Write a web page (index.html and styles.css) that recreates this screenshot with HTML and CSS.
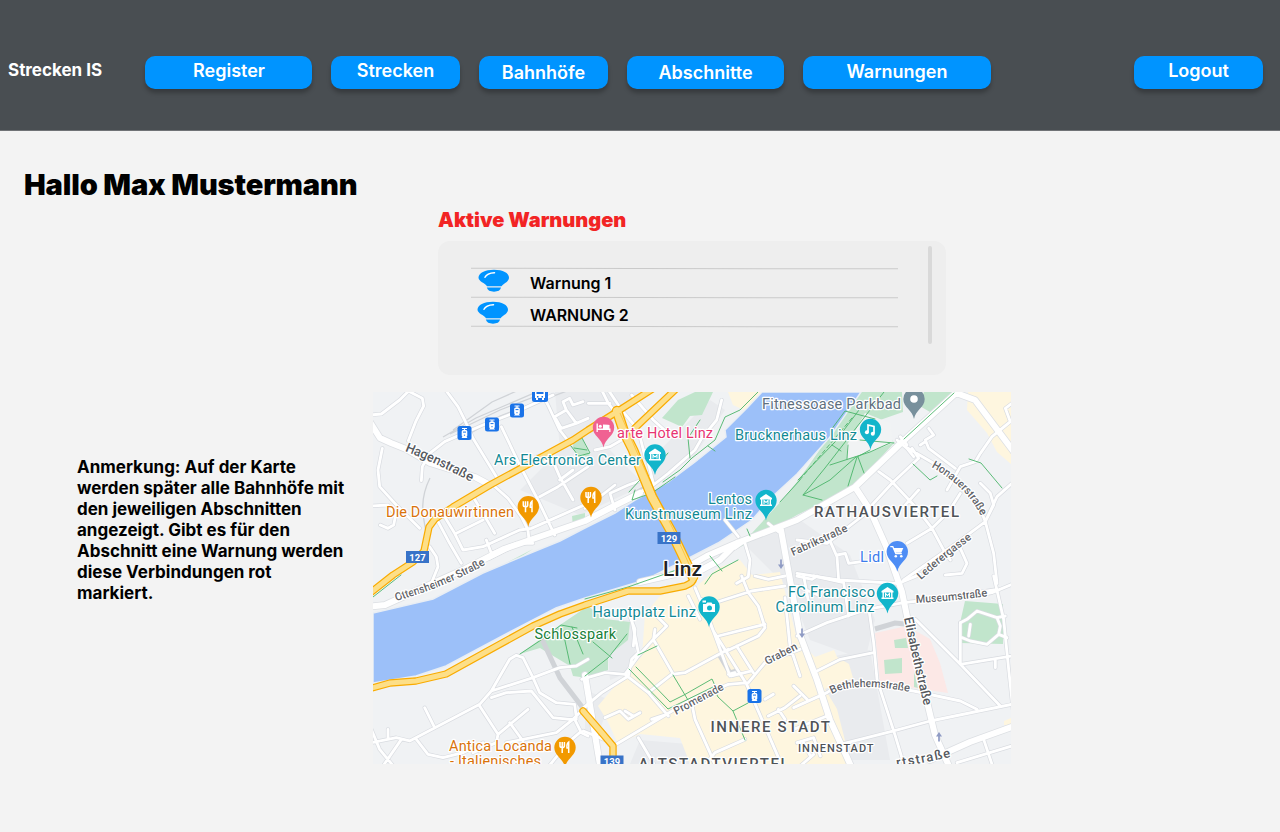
FILE: index.html
```html
<!DOCTYPE html>
<html lang="de">
<head>
<meta charset="utf-8">
<title>Strecken IS</title>
<link rel="stylesheet" href="styles.css">
</head>
<body>
<header class="topbar">
  <div class="brand">Strecken IS</div>
  <nav class="nav">
    <a class="btn w-register">Register</a>
    <a class="btn w-small">Strecken</a>
    <a class="btn w-small low">Bahnhöfe</a>
    <a class="btn w-sections low">Abschnitte</a>
    <a class="btn w-warnings mid">Warnungen</a>
  </nav>
  <a class="btn w-small logout">Logout</a>
</header>
<main>
  <h1>Hallo Max Mustermann</h1>
  <section class="warnings">
    <h2>Aktive Warnungen</h2>
    <div class="card">
      <div class="list">
        <div class="rule"></div>
        <div class="row"><svg class="lamp" viewBox="0 0 32 24"><use href="#lamp"/></svg><span>Warnung 1</span></div>
        <div class="rule"></div>
        <div class="row second"><svg class="lamp" viewBox="0 0 32 24"><use href="#lamp"/></svg><span>WARNUNG 2</span></div>
        <div class="rule"></div>
      </div>
      <div class="scrollbar"></div>
    </div>
  </section>
  <section class="overview">
    <p class="note">Anmerkung: Auf der Karte werden später alle Bahnhöfe mit den jeweiligen Abschnitten angezeigt. Gibt es für den Abschnitt eine Warnung werden diese Verbindungen rot markiert.</p>
    <svg class="map" viewBox="373 392 638 372">
      <defs>
        <g id="lamp">
          <path fill="#0094ff" d="M16 .7C25 .7 31 4 31 8.500C31 12.500 26.500 14 23.500 17.200H9C7 14 .5 12.500 .5 8.500C.5 4 7 .7 16 .7Z"/>
          <path fill="#0094ff" d="M8.800 18.600H23C22.500 21.500 20 22.700 16 22.700S9.500 21.500 8.800 18.600Z"/>
          <path fill="none" stroke="#fff" stroke-width="1.500" stroke-linecap="round" d="M7 8.300C8.500 5 11.500 4 16.500 3.800"/>
        </g>
        <path id="pin" d="M0 20C-1.500 11 -10.700 8.500 -10.700 0A10.700 10.700 0 1 1 10.700 0C10.700 8.500 1.500 11 0 20Z"/>
        <path id="fork" fill="none" stroke="#fff" stroke-width="1.500" d="M-5-5.500V-1.500Q-5 0-2.800 0T-.6-1.500V-5.500M-2.800-5.500V5.500M3.700 5.500V-5.500Q1.500-4 2 .5H3.700"/>
        <g id="museum"><path fill="#fff" d="M-6-2.600L0-6.500L6-2.600V-1H-6ZM-5-1H-3.600V4H-5ZM3.600-1H5V4H3.600ZM-6 4H6V5.600H-6Z"/><path fill="none" stroke="#fff" stroke-width="1.100" d="M-2 3.500V-.2L0 2L2-.2V3.500"/></g>
        <g id="tram"><rect x="-7" y="-7" width="14" height="14" rx="2.500" fill="#1a73e8"/><path fill="#fff" d="M-2.500-5H2.500V-4H.6V-3H1.500Q2.800-3 2.800-1.500V2.500Q2.800 3.500 2 3.700L3 5H-3L-2 3.700Q-2.800 3.500-2.800 2.500V-1.500Q-2.800-3-1.500-3H-.6V-4H-2.500Z"/><path stroke="#1a73e8" d="M-1.500-.9H1.500M-.6 2.200H.6"/></g>
        <g id="arrow"><path stroke="#8f9bc4" stroke-width="1.700" d="M0-4.500V2"/><path fill="#8f9bc4" d="M-3 .5H3L0 5Z"/></g>

        <g id="minor">
          <g transform="translate(373 390) scale(.33333)">
            <path d="M-10 75L25 72L80 30L110 0M110 5L148 25L152 48L128 95L106 152M218 0L255 50L275 90L300 145L370 260M145 272L148 230L170 190L215 155L330 105L420 70L540 15M28 175L15 240L20 290L70 345L140 415M-5 348L45 345L68 375L62 405L45 415L22 405M360 285L405 325L445 380L465 420L468 450M385 110L440 225L495 330L545 435M500 0L525 45L560 120L595 165M490 200L530 190L560 260L600 330M500 320L555 290L645 230M560 270L600 240M545 80L580 60L610 100L645 85M545 80L565 115L610 100M580 60L570 35L590 25L600 45L630 35M300 320L330 370L365 430M250 430L330 390M215 380L245 430L270 480L330 470L440 420L475 415L645 340M190 385L230 460L265 520M170 470L190 500L195 530L175 580M340 450L355 490L430 460M350 505L440 460L480 460"/>
          </g>
          <g transform="translate(585 390) scale(.33333)">
            <path d="M50 0L70 40L85 60M70 0L110 60L160 120L180 200M140 15L205 90L255 135M10 40L75 40M30 180L75 170L110 150M0 355L90 285M410 30L395 90L350 145L330 180L250 250L205 285L140 320L80 355M200 260L130 285L75 310L90 360M180 180L205 280M450 475L500 440M480 460L495 510L490 560L455 580M420 390L460 440M550 400L580 425"/>
          </g>
          <g transform="translate(797 390) scale(.33333)">
            <path d="M645 40L625 55L640 95L585 140L550 190L535 215L490 230L450 300M395 115L410 135L385 150L395 175L475 235M325 170L410 220M370 165L385 155M310 140L330 165M345 175L365 205L285 280L225 345M245 245L280 270L355 350L405 415L440 480L460 510M320 350L365 300M330 460L405 415L455 365L490 310M550 280L580 310L590 345L565 395M645 280L600 320L565 395L485 455L320 570M410 220L490 275L540 330L565 395M565 395L590 490L600 580M440 485L490 475L510 520L495 550L445 555M0 450L90 460L200 375M100 455L120 500L125 570M120 495L145 490L155 520L230 510M0 550L125 570L300 580M300 150L330 175L350 200"/>
          </g>
          <g transform="translate(373 576) scale(.33333)">
            <path d="M355 345L410 250L430 238L450 245L480 305L500 350L550 380L605 385L610 425M-5 500L70 485L110 495L320 385L355 345L480 305L560 275L610 270L645 250M355 365L400 350L475 345L540 425L590 430L610 430M155 395L185 455M320 390L375 475L370 500L300 530M375 475L465 400M410 440L450 495M130 490L165 535L210 545L270 530L330 500M45 460L45 485M-5 460L20 520L65 575M85 490L30 570M645 385L600 430L550 470L400 500M605 430L625 470L645 480M620 470L585 500L520 580"/>
          </g>
          <g transform="translate(585 576) scale(.33333)">
            <path d="M330 35L385 165L485 325L600 590M350 70L435 300M310 60L345 130M400 180L540 145M360 90L500 45L600 30M470 0L490 50L520 90L540 155L520 180L425 225M455 210L505 290M600 65L615 210L645 300M490 320L540 260L645 220M640 100L690 95M-10 310L60 290L120 295L160 240L205 190L245 150L215 120M205 190L225 225L265 295M120 295L190 350L250 420M-10 400L50 350L130 300L140 250L160 230L140 130M190 350L260 295L300 290L430 220M85 510L245 415L320 370L430 325L490 320M320 380L330 430L375 530L395 580M160 485L210 570M60 425L105 405L130 430L165 410M120 405L145 420M-5 465L80 500M540 370L565 355M550 420L600 395L645 360M580 400L600 430M350 580L390 530L480 490M200 430L245 415M130 110L150 160L145 210M430 295L450 290M440 300L500 285M510 0L550 10L600 0M210 160L205 195"/>
          </g>
          <g transform="translate(797 576) scale(.33333)">
            <path d="M0 180L90 140L210 100L320 80L410 70L600 40M0 0L45 10L60 0M50 0L140 20L155 120M215 95L230 200L240 310L295 480L325 580M60 285L130 250L230 230M-10 395L90 350L120 330L245 330L350 345L420 360L490 375L540 400M355 130L490 265L610 390M490 265L645 240M490 140L490 265M590 0L620 130L635 280L650 420M560 490L590 580M130 505L290 465L400 435L645 385M90 420L-10 460M0 500L50 485L70 540M10 570L50 535M20 500L40 540M-10 330L30 370M595 250L595 275M645 25L585 50L560 55M480 560L645 510M310 20L370 -5M0 30L70 60M20 0L35 80"/>
            <path d="M490 140L510 130L540 105L600 125L610 150L605 175L570 205L520 195L495 185M600 125L625 120M605 175L630 185M515 180L520 145"/>
          </g>
        </g>
        <path id="major" d="M365 414L380 438L391 443L406 449L430 463L475 477L490 485M365 607L385 605L418 590L465 569L504 549L530 540L585 521L610 508L640 493M640 582L675 574L707 556L737 543L797 520L855 487L900 444L956 393L975 400L1020 460M855 487L870 510L886 546L902 592L910 631L935 735L953 775M690 576L720 560L737 543M781 530L790 580L800 635L817 680L830 720L855 775M600 765L585 675M930 760L970 742L1020 724"/>
        <path id="arterial" d="M365 597L393 575L413 562L424 551L429 527L435 519L453 507L490 485L573 440L588 430L615 413L654 388M635 428L676 389M693 577Q695 582 685 586L660 591L628 591L585 605L560 614L533 626L446 674L416 681L390 683L365 690M583 711L602 733L613 746L613 770"/>
        <path id="bridge" d="M617 411L624 432L633 450L652 497L672 533L693 577"/>
        <path id="honauer" d="M931 467Q968 487 983 520"/>
        <path id="hagen" d="M405 451Q436 463 473 483"/>
        <path id="ottensheimer" d="M396 601Q446 587 488 563"/>
        <path id="fabrik" d="M793 556Q820 544 850 530"/>
        <path id="lederer" d="M921 580Q944 559 974 537"/>
        <path id="museumstr" d="M916 603Q953 601 989 596"/>
        <path id="elisabeth" d="M904 618Q914 666 925 710"/>
        <path id="bethlehem" d="M832 694Q853 681 911 692"/>
        <path id="graben" d="M767 665L800 648"/>
        <path id="promenade" d="M676 715L727 688"/>
        <path id="cut-street" d="M897 767Q920 764 955 756"/>
      </defs>

      <rect x="373" y="392" width="638" height="372" fill="#f0f2f4"/>
      <g fill="#e9ebee">
        <path d="M555 392H640L600 440L645 485L580 515L520 490L560 450ZM660 450L710 400L725 410L695 455L645 490ZM740 540L800 520L850 555L875 620L865 660L810 640L790 590ZM810 660L870 650L890 760H850ZM605 620L635 620L635 670L610 680ZM585 690L610 700L600 730L585 735ZM640 740L700 745V764H630Z"/>
      </g>
      <g fill="#fef6df">
        <path d="M728 392H762L746 411L733 405ZM968 392H1011V464L997 452L987 433L967 410ZM645 614L660 596L697 586L718 568L740 560L752 575L780 572L797 639L815 657L834 650L837 657L849 664L853 678L825 689L837 709L851 764H690L680 738L640 734L618 744L608 722L598 706L626 673L642 656Z"/>
        <path d="M1004 721L1011 718V725H1004Z"/>
      </g>
      <path fill="#fce8e6" d="M875 633L907 626L930 639L940 663L948 693L880 683Z"/>
      <g fill="#c1e5cc">
        <path d="M695 392H713L702 415L690 416L682 427L662 418L678 400ZM860 392H902L903 412L880 420L894 443L854 487L797 515L735 550L708 557L752 533L785 497L800 478ZM924 392H953L930 412L918 405ZM588 606L605 619L630 622L628 640L608 656V670L588 678L573 676L570 666L540 648L520 654L560 625ZM965 601L1003 604V644L960 643V623ZM894 640L906 638L908 648H895ZM884 660L902 658V673L885 674ZM914 671L918 688L914 687ZM571 443L582 438L590 456L578 457ZM572 516L585 513V524L573 527ZM433 604L487 573L533 549L500 570Z"/>
      </g>
      <path fill="#f1f3f4" d="M847 445L865 413L890 423L893 443L870 452L847 459Z"/>
      <path class="river" d="M762 392L748 407L725 430L726 437L695 462L668 482L635 500L615 513L585 528L560 541L533 552L483 573L433 599L373 613V683L416 676L446 666L506 634L556 608L585 598L645 580L685 560L718 543L752 520L772 497L797 474L830 437L861 392Z"/>
      <g fill="none" stroke="#d0d3d7" stroke-width="1.300">
        <path d="M443 437L476 418L555 384M450 434L500 410L565 385M453 430L492 402L530 385M430 478C414 510 430 530 427 550M459 440L500 416L575 388"/>
        <path stroke-width="5" d="M541 637L560 678L586 712M719 654L730 673L737 671M875 629L895 623L905 624M634 494L656 482"/>
      </g>
      <use href="#minor" class="road minor-case"/>
      <use href="#major" class="road major-case"/>
      <use href="#minor" class="road minor-fill"/>
      <use href="#major" class="road major-fill"/>
      <g class="paths">
        <path d="M758 392L740 410L725 417L715 440L692 458L680 470L663 482M700 420L688 438L690 458M655 468L668 453M708 446L715 451M635 490L632 500L652 493L675 477M570 444L582 438L590 453L579 456ZM574 448L587 450M884 392L825 468L803 495L822 500M865 402L835 442L798 480M847 459L848 445M860 440L894 443M830 465L870 452L890 443M870 450L857 457L848 486M858 457L864 473M803 495L830 480L856 457M780 502L800 480M954 393L904 439M913 464L930 480L937 476M969 459L981 463L1002 488M747 529L750 536M710 556L722 571M520 654L541 640L561 625L577 628M572 627L583 654M562 627L570 664M585 676L608 658L627 634M593 642L612 658M629 669L668 709L713 687L718 697L733 711L748 703M636 667L670 702L684 695L712 679L717 690M673 675L688 700M733 711L745 740M638 655L657 646M585 599L628 587L685 567M705 584L712 574L738 560M373 597L401 575M831 430L845 411L875 419M832 445L841 451M629 492L640 480"/>
        <path stroke-dasharray="4 3" d="M852 418L798 482"/>
      </g>
      <use href="#bridge" class="road bridge-case"/>
      <use href="#arterial" class="road art-case"/>
      <use href="#bridge" class="road bridge-fill"/>
      <use href="#arterial" class="road art-fill"/>
      <path d="M620 413L636 450L654 490L674 531L694 575" stroke="#f9ab00" stroke-width=".8" stroke-opacity=".6" fill="none"/>
      <use href="#arrow" x="781" y="564"/><use href="#arrow" x="802" y="633"/><g transform="translate(939 737) rotate(180)"><use href="#arrow"/></g>

      <g class="label street">
        <text class="big"><textPath href="#hagen" textLength="73">Hagenstraße</textPath></text>
        <text><textPath href="#ottensheimer" textLength="97">Ottensheimer Straße</textPath></text>
        <text><textPath href="#fabrik" textLength="61">Fabrikstraße</textPath></text>
        <text><textPath href="#honauer" textLength="71">Honauerstraße</textPath></text>
        <text><textPath href="#lederer" textLength="66">Lederergasse</textPath></text>
        <text><textPath href="#museumstr" textLength="72">Museumstraße</textPath></text>
        <text class="big"><textPath href="#elisabeth" textLength="90">Elisabethstraße</textPath></text>
        <text><textPath href="#bethlehem" textLength="79">Bethlehemstraße</textPath></text>
        <text><textPath href="#graben" textLength="35">Graben</textPath></text>
        <text><textPath href="#promenade" textLength="55">Promenade</textPath></text>
        <text class="big"><textPath href="#cut-street" textLength="55">rtstraße</textPath></text>
      </g>
      <g class="label poi">
        <text class="food" x="386" y="517" textLength="128">Die Donauwirtinnen</text>
        <text class="food" x="449" y="751" textLength="103">Antica Locanda</text>
        <text class="food" x="450" y="766" textLength="91">- Italienisches</text>
        <text class="hotel" x="617" y="438" textLength="96">arte Hotel Linz</text>
        <text x="494" y="465" textLength="147">Ars Electronica Center</text>
        <text x="735" y="440" textLength="122">Brucknerhaus Linz</text>
        <text x="708" y="503.500" textLength="44">Lentos</text>
        <text x="625" y="518.500" textLength="127">Kunstmuseum Linz</text>
        <text class="leisure" x="762" y="409" textLength="139">Fitnessoase Parkbad</text>
        <text class="shop" x="860" y="562" textLength="24">Lidl</text>
        <text x="788" y="596.500" textLength="87">FC Francisco</text>
        <text x="775.500" y="611.500" textLength="99">Carolinum Linz</text>
        <text x="592.500" y="617" textLength="103.500">Hauptplatz Linz</text>
        <text class="park" x="534.500" y="638.500" textLength="81.500">Schlosspark</text>
      </g>
      <g class="label district">
        <text x="814" y="517" textLength="145">RATHAUSVIERTEL</text>
        <text x="710.500" y="732" textLength="119.500">INNERE STADT</text>
        <text x="638.500" y="769" textLength="150">ALTSTADTVIERTEL</text>
        <text class="small" x="798" y="752" textLength="75.500">INNENSTADT</text>
        <text class="city" x="663" y="576" textLength="39">Linz</text>
      </g>
      <g class="shield">
        <rect x="406" y="551" width="23" height="12"/><text x="417.500" y="560.500">127</text>
        <rect x="657.500" y="532" width="23" height="12"/><text x="669" y="541.500">129</text>
        <rect x="600.500" y="755.500" width="23" height="12"/><text x="612" y="765">139</text>
      </g>
      <use href="#tram" x="464.500" y="433"/><use href="#tram" x="492" y="424.500"/><use href="#tram" x="517" y="410.500"/><use href="#tram" x="754.500" y="696"/>
      <g transform="translate(540 395)"><rect x="-8" y="-8" width="16" height="15" rx="2.500" fill="#1a73e8"/><path fill="#fff" d="M-5-5H5V3H4V5H2V3H-2V5H-4V3H-5Z"/><path fill="#1a73e8" d="M-3.500-4H3.500V-1H-3.500ZM-3 1H-1.500V2.500H-3ZM1.500 1H3V2.500H1.500Z"/></g>

      <g transform="translate(528.300 506.700)"><use href="#pin" fill="#f29900"/><use href="#fork"/></g>
      <g transform="translate(591 497.500)"><use href="#pin" fill="#f29900"/><use href="#fork"/></g>
      <g transform="translate(565 747.500)"><use href="#pin" fill="#f29900"/><use href="#fork"/></g>
      <g transform="translate(603.500 427.500)"><use href="#pin" fill="#f06292"/><path fill="#fff" d="M-7-4H-5.600V1H6V-2.500Q6-3-.5-3V1H-5V2.300H-7ZM-7 1H7V4.500H5.700V2.600H-5.700V4.500H-7Z"/><circle cx="-3.200" cy="-1.200" r="1.500" fill="#fff"/></g>
      <g fill="#12b5cb">
        <g transform="translate(655 455)"><use href="#pin"/><use href="#museum"/></g>
        <g transform="translate(766 500.500)"><use href="#pin"/><use href="#museum"/></g>
        <g transform="translate(887.500 593.500)"><use href="#pin"/><use href="#museum"/></g>
        <g transform="translate(870.500 429.500)"><use href="#pin"/><path d="M-2.500 2.500V-4.500L3.500-3V4" fill="none" stroke="#fff" stroke-width="1.700"/><circle cx="-3.600" cy="2.700" r="2" fill="#fff"/><circle cx="2.300" cy="4.300" r="2" fill="#fff"/></g>
        <g transform="translate(709 607)"><use href="#pin"/><path fill="#fff" d="M-6-3H-3L-1.800-4.500H2.500L3.500-3H6V5H-6ZM-6.500-6.500H-3V-4.500H-6.500Z"/><circle cx=".5" cy="1" r="2.500"/></g>
      </g>
      <g transform="translate(897.300 551.700)"><use href="#pin" fill="#4e8df5"/><path fill="none" stroke="#fff" stroke-width="1.300" d="M-7-5H-4.500L-1.500 2H4.500"/><path fill="#fff" d="M-4-3.800H6L4 1H-2Z"/><circle cx="-1.500" cy="4.500" r="1.300" fill="#fff"/><circle cx="4" cy="4.500" r="1.300" fill="#fff"/></g>
      <g transform="translate(914 399)"><use href="#pin" fill="#78909c"/><circle r="3.800" fill="#fff"/></g>
    </svg>
  </section>
</main>
</body>
</html>
```
FILE: styles.css
```css
* { box-sizing: border-box; }
body { margin: 0; width: 1280px; height: 832px; overflow: hidden; background: #f3f3f3; color: #000; font-family: Inter, "Liberation Sans", sans-serif; font-optical-sizing: none; }
.topbar { display: flex; align-items: flex-start; height: 131px; padding: 56px 17px 0 8px; background: #494e52; border-bottom: 1px solid #707376; color: #fff; }
.brand { width: 137px; font-size: 17px; font-weight: 700; line-height: 28px; white-space: nowrap; }
.nav { display: flex; gap: 19px; }
.btn { height: 33px; border-radius: 10px; background: #0094ff; box-shadow: 0 4px 4px rgba(0,0,0,.25); font-size: 18px; font-weight: 600; line-height: 30px; text-align: center; }
.low { padding-top: 2px; }
.mid { padding-top: 1px; }
.w-register { width: 167px; padding-left: 1px; }
.w-small { width: 129px; }
.w-sections { width: 157px; }
.w-warnings { width: 188px; }
.logout { margin-left: auto; }
h1 { margin: 0; padding: 35px 0 0 24px; height: 75px; font-size: 29px; font-weight: 900; line-height: 38px; letter-spacing: -.13px; white-space: nowrap; }
.warnings { margin-left: 438px; width: 508px; }
h2 { margin: 0; height: 35px; font-size: 20px; font-weight: 900; line-height: 28px; color: #f22424; white-space: nowrap; }
.card { display: flex; justify-content: space-between; height: 134px; padding: 5px 14px 0 33px; border-radius: 12px; background: #eee; }
.list { width: 427px; padding-top: 22px; }
.rule { height: 1px; background: #cacaca; transform: rotate(.1deg); }
.row { display: flex; align-items: flex-start; height: 28px; padding: 0 0 0 6.500px; font-size: 16px; font-weight: 600; line-height: 28px; }
.row.second { padding-top: 3px; font-size: 15.900px; }
.row.second span { line-height: 30px; }
.lamp { width: 32px; height: 24px; margin-right: 20.500px; flex: none; }
.row.second .lamp { margin-left: -.5px; margin-right: 21px; }
.scrollbar { width: 4px; height: 98px; border-radius: 2px; background: #d9d9d9; }
.overview { display: flex; margin-top: 17px; }
.note { width: 373px; margin: 0; padding: 65px 26px 0 77px; font-size: 17px; font-weight: 700; line-height: 21px; }
.map { width: 638px; height: 372px; flex: none; font-family: Roboto, sans-serif; overflow: hidden; }
.river { fill: #9cc0f9; stroke: #e9eef4; stroke-width: 1.500; }
.road, .paths { fill: none; stroke-linejoin: round; stroke-linecap: round; }
.minor-case { stroke: #d8dbe0; stroke-width: 12.500; }
.minor-fill { stroke: #fff; stroke-width: 8.500; }
.major-case { stroke: #dcdfe3; stroke-width: 7.500; }
.major-fill { stroke: #fff; stroke-width: 6; }
.art-case { stroke: #f9ab00; stroke-width: 7.400; }
.art-fill { stroke: #fddf88; stroke-width: 5; }
.bridge-case { stroke: #f9ab00; stroke-width: 10.500; }
.bridge-fill { stroke: #fddf88; stroke-width: 8; }
.paths { stroke: #4bb46a; stroke-width: .9; }
.label text { stroke: #fff; stroke-width: 2.500px; paint-order: stroke; stroke-linejoin: round; }
.street { fill: #5f6368; font-size: 11px; font-weight: 500; }
.street .big { font-size: 13px; fill: #55595e; }
.poi { fill: #128995; font-size: 14.500px; }
.poi .food { fill: #d9730b; }
.poi .hotel { fill: #e83572; }
.poi .leisure { fill: #607080; }
.poi .shop { fill: #3c7cec; }
.poi .park { fill: #188038; }
.district { fill: #4f5358; font-size: 15px; font-weight: 500; }
.district .small { font-size: 11px; }
.district .city { fill: #202124; font-size: 21px; }
.shield rect { fill: #3873c8; }
.shield text { fill: #fff; font-size: 9.500px; font-weight: 700; text-anchor: middle; }
```
